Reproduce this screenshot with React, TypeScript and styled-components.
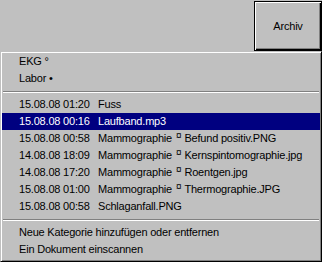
import styled, { createGlobalStyle } from "styled-components";

const GlobalStyle = createGlobalStyle`
  html, body {
    margin: 0;
    padding: 0;
    background: #c0c0c0;
  }
  body {
    font-family: "Liberation Sans", Arial, sans-serif;
    font-size: 11px;
    color: #000;
  }
`;

type Doc = { date: string; category?: string; name: string };

const CATEGORIES = [
  { label: "EKG", mark: "°" },
  { label: "Labor", mark: "•" },
];

const DOCS: Doc[] = [
  { date: "15.08.08 01:20", name: "Fuss" },
  { date: "15.08.08 00:16", name: "Laufband.mp3" },
  { date: "15.08.08 00:58", category: "Mammographie", name: "Befund positiv.PNG" },
  { date: "14.08.08 18:09", category: "Mammographie", name: "Kernspintomographie.jpg" },
  { date: "14.08.08 17:20", category: "Mammographie", name: "Roentgen.jpg" },
  { date: "15.08.08 01:00", category: "Mammographie", name: "Thermographie.JPG" },
  { date: "15.08.08 00:58", name: "Schlaganfall.PNG" },
];

const ACTIONS = [
  "Neue Kategorie hinzufügen oder entfernen",
  "Ein Dokument einscannen",
];

const SELECTED = 1;

export default function App() {
  return (
    <>
      <GlobalStyle />
      <Screen>
        <TopBar>
          <ArchiveButton>Archiv</ArchiveButton>
        </TopBar>

        {/* POPUP MENU */}
        <Menu>
          {CATEGORIES.map((c) => (
            <Item key={c.label}>
              {c.label} {c.mark}
            </Item>
          ))}
          <Separator />
          {DOCS.map((d, i) => (
            <Item key={d.date + d.name} $selected={i === SELECTED}>
              <DateCol>{d.date}</DateCol>
              <span>
                {d.category && (
                  <>
                    {d.category}
                    <Sep>¤</Sep>
                  </>
                )}
                {d.name}
              </span>
            </Item>
          ))}
          <Separator />
          {ACTIONS.map((a) => (
            <Item key={a}>{a}</Item>
          ))}
        </Menu>
      </Screen>
    </>
  );
}

const Screen = styled.div`
  width: 322px;
  height: 262px;
  display: flex;
  flex-direction: column;
  overflow: hidden;
`;

const TopBar = styled.div`
  height: 51px;
  display: flex;
  justify-content: flex-end;
  align-items: flex-start;
  padding-top: 1px;
  box-sizing: border-box;
`;

const ArchiveButton = styled.button`
  width: 68px;
  height: 50px;
  margin: 0;
  padding: 0;
  background: #c0c0c0;
  border: 1px solid #000;
  box-shadow: inset 1px 1px #fff, inset -1px -1px #000, inset -2px -2px #808080;
  font-family: "Liberation Sans", Arial, sans-serif;
  font-size: 11px;
  letter-spacing: -0.2px;
  color: #000;
  display: flex;
  align-items: center;
  justify-content: center;
`;

const Menu = styled.div`
  flex: 1;
  display: flex;
  flex-direction: column;
  padding: 1px;
  border: 1px solid;
  border-color: #c0c0c0 #000 #000 #c0c0c0;
  box-shadow: inset 1px 1px #fff, inset -1px -1px #808080;
  box-sizing: border-box;
`;

const Item = styled.div<{ $selected?: boolean }>`
  height: 17px;
  line-height: 17px;
  padding-left: 17px;
  display: flex;
  white-space: nowrap;
  letter-spacing: -0.2px;
  background: ${(p) => (p.$selected ? "#000080" : "transparent")};
  color: ${(p) => (p.$selected ? "#fff" : "#000")};
`;

const DateCol = styled.span`
  width: 79px;
  flex-shrink: 0;
`;

const Sep = styled.span`
  display: inline-block;
  font-size: 10px;
  margin: 0 3px 0 4px;
  position: relative;
  top: -3px;
`;

const Separator = styled.div`
  height: 9px;
  display: flex;
  align-items: center;
  &::after {
    content: "";
    flex: 1;
    margin: 0 1px;
    height: 1px;
    background: #808080;
    border-bottom: 1px solid #fff;
  }
`;
